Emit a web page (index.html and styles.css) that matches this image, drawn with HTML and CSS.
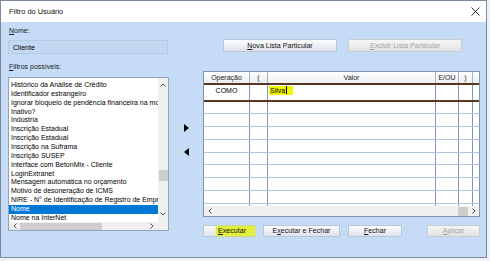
FILE: index.html
```html
<!DOCTYPE html>
<html lang="pt-BR">
<head>
    <meta charset="UTF-8">
    <title>Filtro do Usuário</title>
    <link rel="stylesheet" href="styles.css">
</head>
<body>
<div class="window">
    <div class="titlebar">
        <span class="title">Filtro do Usuário</span>
        <svg class="close" width="9" height="9" viewBox="0 0 9 9"><path d="M0.5 0.5 L8.5 8.5 M8.5 0.5 L0.5 8.5" stroke="#333" stroke-width="1" fill="none"/></svg>
    </div>

    <div class="content">
        <!-- lista de filtros -->
        <div class="left">
            <div class="lbl"><u>N</u>ome:</div>
            <div class="name-box">Cliente</div>
            <div class="lbl lbl-filtros"><u>F</u>iltros possíveis:</div>
            <div class="listbox">
                <div class="list-main">
                    <ul class="items">
                        <li>Histórico da Análise de Crédito</li>
                        <li>Identificador estrangeiro</li>
                        <li>Ignorar bloqueio de pendência financeira na moeda</li>
                        <li>Inativo?</li>
                        <li>Indústria</li>
                        <li>Inscrição Estadual</li>
                        <li>Inscrição Estadual</li>
                        <li>Inscrição na Suframa</li>
                        <li>Inscrição SUSEP</li>
                        <li>Interface com BetonMix - Cliente</li>
                        <li>LoginExtranet</li>
                        <li>Mensagem automática no orçamento</li>
                        <li>Motivo de desoneração de ICMS</li>
                        <li>NIRE - N° de Identificação de Registro de Empresa</li>
                        <li class="selected">Nome</li>
                        <li>Nome na InterNet</li>
                    </ul>
                    <div class="vscroll">
                        <svg class="chev" width="6" height="4" viewBox="0 0 6 4"><path d="M0.5 3.5 L3 1 L5.5 3.5" stroke="#555" fill="none"/></svg>
                        <div class="vthumb"></div>
                        <svg class="chev chev-down" width="6" height="4" viewBox="0 0 6 4"><path d="M0.5 0.5 L3 3 L5.5 0.5" stroke="#555" fill="none"/></svg>
                    </div>
                </div>
                <div class="list-foot">
                    <div class="hscroll">
                        <svg width="4" height="6" viewBox="0 0 4 6"><path d="M3.5 0.5 L1 3 L3.5 5.5" stroke="#555" fill="none"/></svg>
                        <div class="hthumb"></div>
                        <svg width="4" height="6" viewBox="0 0 4 6"><path d="M0.5 0.5 L3 3 L0.5 5.5" stroke="#555" fill="none"/></svg>
                    </div>
                    <div class="corner"></div>
                </div>
            </div>
        </div>

        <div class="mid">
            <svg class="arrow" width="5" height="8" viewBox="0 0 5 8"><polygon points="0,0 5,4 0,8" fill="#000"/></svg>
            <svg class="arrow arrow-left" width="5" height="8" viewBox="0 0 5 8"><polygon points="5,0 0,4 5,8" fill="#000"/></svg>
        </div>

        <div class="right">
            <div class="top-buttons">
                <button class="btn btn-nova"><u>N</u>ova Lista Particular</button>
                <button class="btn btn-excluir" disabled><u>E</u>xcluir Lista Particular</button>
            </div>

            <div class="grid">
                <div class="grid-row grid-head">
                    <div class="cell">Operação</div>
                    <div class="cell">(</div>
                    <div class="cell">Valor</div>
                    <div class="cell">E/OU</div>
                    <div class="cell">)</div>
                    <div class="cell"></div>
                </div>
                <div class="grid-row current">
                    <div class="cell">COMO</div>
                    <div class="cell"></div>
                    <div class="cell cell-value"><span class="hl">Silva<span class="caret"></span></span></div>
                    <div class="cell"></div>
                    <div class="cell"></div>
                    <div class="cell"></div>
                </div>
                <div class="grid-body">
                    <div class="grid-row"><div class="cell"></div><div class="cell"></div><div class="cell"></div><div class="cell"></div><div class="cell"></div><div class="cell"></div></div>
                    <div class="grid-row"><div class="cell"></div><div class="cell"></div><div class="cell"></div><div class="cell"></div><div class="cell"></div><div class="cell"></div></div>
                    <div class="grid-row"><div class="cell"></div><div class="cell"></div><div class="cell"></div><div class="cell"></div><div class="cell"></div><div class="cell"></div></div>
                    <div class="grid-row"><div class="cell"></div><div class="cell"></div><div class="cell"></div><div class="cell"></div><div class="cell"></div><div class="cell"></div></div>
                    <div class="grid-row"><div class="cell"></div><div class="cell"></div><div class="cell"></div><div class="cell"></div><div class="cell"></div><div class="cell"></div></div>
                    <div class="grid-row"><div class="cell"></div><div class="cell"></div><div class="cell"></div><div class="cell"></div><div class="cell"></div><div class="cell"></div></div>
                    <div class="grid-row"><div class="cell"></div><div class="cell"></div><div class="cell"></div><div class="cell"></div><div class="cell"></div><div class="cell"></div></div>
                    <div class="grid-row"><div class="cell"></div><div class="cell"></div><div class="cell"></div><div class="cell"></div><div class="cell"></div><div class="cell"></div></div>
                    <div class="grid-row"><div class="cell"></div><div class="cell"></div><div class="cell"></div><div class="cell"></div><div class="cell"></div><div class="cell"></div></div>
                </div>
                <div class="grid-scroll">
                    <svg width="4" height="6" viewBox="0 0 4 6"><path d="M3.5 0.5 L1 3 L3.5 5.5" stroke="#444" fill="none"/></svg>
                    <div class="gthumb"></div>
                    <svg width="4" height="6" viewBox="0 0 4 6"><path d="M0.5 0.5 L3 3 L0.5 5.5" stroke="#444" fill="none"/></svg>
                </div>
            </div>

            <div class="bottom-buttons">
                <button class="btn btn-exec"><span class="mark"><u>E</u>xecutar</span></button>
                <button class="btn btn-exec-fechar">E<u>x</u>ecutar e Fechar</button>
                <button class="btn btn-fechar"><u>F</u>echar</button>
                <button class="btn btn-aplicar" disabled><u>A</u>plicar</button>
            </div>
        </div>
    </div>
</div>
</body>
</html>
```

FILE: styles.css
```css
body {
    margin: 0;
    background-color: #eef2f7;
    font-family: "Liberation Sans", Arial, sans-serif;
    font-size: 7px;
    color: #000;
}

.window {
    box-sizing: border-box;
    width: 487px;
    height: 258px;
    border: 1px solid #7c8a9c;
    background-color: #c6dcf6;
    display: flex;
    flex-direction: column;
}

.titlebar {
    height: 21px;
    background-color: #ffffff;
    display: flex;
    align-items: center;
    justify-content: space-between;
    padding: 0 6px 0 8px;
}

.title {
    font-size: 7.4px;
    color: #111;
}

.close {
    display: block;
}

.content {
    display: grid;
    grid-template-columns: 162px 33px 277px;
    padding-left: 7px;
}

/* coluna esquerda */
.left {
    display: flex;
    flex-direction: column;
}

.lbl {
    height: 8px;
    line-height: 8px;
    margin-top: 5px;
    padding-left: 1px;
    color: #1a1a1a;
}

.lbl-filtros {
    margin-top: 9px;
}

.name-box {
    box-sizing: border-box;
    width: 160px;
    height: 14px;
    margin-top: 5px;
    padding-left: 4px;
    line-height: 13px;
    background-color: #c2d8f1;
    border: 1px solid #b5cbe5;
}

.listbox {
    box-sizing: border-box;
    width: 161px;
    height: 154px;
    margin-top: 6px;
    border: 1px solid #8ea4c0;
    background-color: #ffffff;
    display: flex;
    flex-direction: column;
}

.list-main {
    display: flex;
    height: 144px;
}

.items {
    list-style: none;
    margin: 0;
    padding: 3px 0 0 0;
    flex: 1;
    overflow: hidden;
}

.items li {
    height: 8.87px;
    line-height: 8.87px;
    padding-left: 2px;
    white-space: nowrap;
    overflow: hidden;
}

.items li.selected {
    background-color: #0078d7;
    color: #ffffff;
}

.vscroll {
    width: 10px;
    background-color: #f0f0f0;
    display: flex;
    flex-direction: column;
    align-items: center;
}

.chev {
    margin-top: 5px;
}

.vthumb {
    width: 9px;
    height: 11px;
    margin-top: 83px;
    background-color: #cdcdcd;
}

.chev-down {
    margin-top: 31px;
}

.list-foot {
    display: flex;
    height: 8px;
}

.hscroll {
    flex: 1;
    background-color: #f0f0f0;
    display: flex;
    align-items: center;
    padding: 0 4px;
}

.hthumb {
    width: 82px;
    height: 7px;
    margin-left: 3px;
    margin-right: auto;
    background-color: #cdcdcd;
}

.corner {
    width: 10px;
    background-color: #f0f0f0;
}

/* setas do meio */
.mid {
    display: flex;
    flex-direction: column;
    align-items: center;
}

.arrow {
    margin-top: 102px;
}

.arrow-left {
    margin-top: 16px;
}

/* coluna direita */
.right {
    display: flex;
    flex-direction: column;
}

.btn {
    box-sizing: border-box;
    height: 13px;
    padding: 0;
    font-family: "Liberation Sans", Arial, sans-serif;
    font-size: 7.1px;
    color: #111;
    border: 1px solid #b9c6d6;
    border-radius: 1px;
    background: linear-gradient(#fbfcfd, #eef1f5 50%, #dde3ea);
}

.btn:disabled {
    color: #a3a3a3;
    border-color: #c6ccd3;
    background: linear-gradient(#f6f6f6, #e2e2e2);
}

.top-buttons {
    display: flex;
    gap: 11px;
    margin-top: 17px;
    padding-left: 20px;
}

.btn-nova,
.btn-excluir {
    width: 114px;
}

.grid {
    box-sizing: border-box;
    width: 277px;
    height: 146px;
    margin-top: 19px;
    border: 1px solid #7f95b0;
    background-color: #ffffff;
    display: flex;
    flex-direction: column;
}

.grid-row {
    display: grid;
    grid-template-columns: 46px 18px 168px 23px 14px 1fr;
}

.cell {
    box-sizing: border-box;
    border-right: 1px solid #7b98bb;
    text-align: center;
    white-space: nowrap;
    overflow: hidden;
}

.cell:last-child {
    border-right: none;
}

.grid-head {
    height: 11px;
    line-height: 11px;
    background: linear-gradient(#ffffff, #eceef1);
    color: #222;
}

.grid-head .cell {
    border-right-color: #a9b4c2;
}

.current {
    height: 15px;
    line-height: 11px;
    border-top: 2px solid #5a3620;
    border-bottom: 2px solid #5a3620;
}

.cell-value {
    text-align: left;
    padding-left: 1px;
}

.hl {
    display: inline-block;
    height: 9px;
    line-height: 9px;
    padding: 0 6px 0 1px;
    background-color: #f4f400;
}

.caret {
    display: inline-block;
    width: 1px;
    height: 8px;
    margin-left: 1px;
    vertical-align: -1px;
    background-color: #000;
}

.grid-body {
    height: 108px;
    overflow: hidden;
}

.grid-body .grid-row {
    box-sizing: border-box;
    height: 12.75px;
    border-bottom: 1px solid #b4c6dc;
}

.grid-scroll {
    height: 10px;
    background-color: #f0f0f0;
    display: flex;
    align-items: center;
    padding: 0 3px 0 4px;
}

.gthumb {
    width: 10px;
    height: 9px;
    margin-left: auto;
    margin-right: 4px;
    background-color: #cdcdcd;
}

.bottom-buttons {
    display: flex;
    margin-top: 8px;
}

.bottom-buttons .btn {
    height: 12px;
}

.btn-exec {
    width: 52px;
    text-align: left;
}

.mark {
    display: inline-block;
    padding: 1px 9px 1px 2px;
    margin-left: 12px;
    background-color: #e3ef3a;
    box-shadow: 0 0 2px #e3ef3a;
}

.btn-exec-fechar {
    width: 77px;
    margin-left: 8px;
}

.btn-fechar {
    width: 54px;
    margin-left: 8px;
}

.btn-aplicar {
    width: 53px;
    margin-left: 25px;
}
```
